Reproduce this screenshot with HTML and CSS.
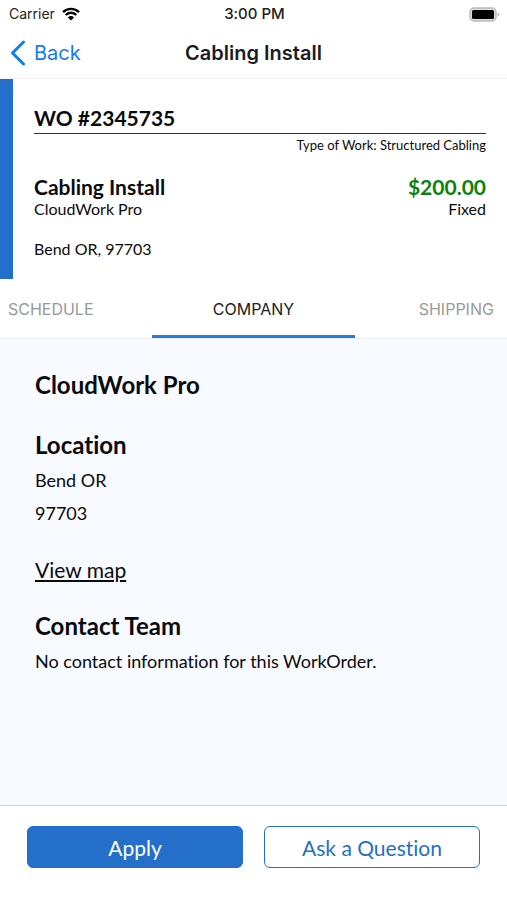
FILE: index.html
```html
<!DOCTYPE html>
<html lang="en">
<head>
    <meta charset="UTF-8">
    <meta name="viewport" content="width=device-width, initial-scale=1.0">
    <title>Cabling Install</title>
    <link rel="stylesheet" href="styles.css">
</head>
<body>

    <!-- Status Bar -->
    <div class="status-bar">
        <div class="carrier">
            <span>Carrier</span>
            <svg class="wifi" viewBox="0 0 18 14" aria-hidden="true">
                <path d="M1 5.2a11.4 11.4 0 0 1 16 0" />
                <path d="M3.7 8a7.5 7.5 0 0 1 10.6 0" />
                <path class="dot" d="M9 13.6 5.9 10.4a4.4 4.4 0 0 1 6.2 0z" />
            </svg>
        </div>
        <span class="time">3:00 PM</span>
        <svg class="battery" viewBox="0 0 31 15" aria-hidden="true">
            <rect class="shell" x="1" y="1" width="26" height="13" rx="4" />
            <rect x="3" y="3" width="22" height="9" rx="1.5" />
            <path class="cap" d="M28.5 5.5q2 .5 2 2t-2 2z" />
        </svg>
    </div>

    <!-- Header -->
    <header class="header">
        <a class="back" href="#">
            <svg viewBox="0 0 16 26" aria-hidden="true">
                <path d="M13.5 2 2.5 13l11 11" />
            </svg>
            Back
        </a>
        <h1>Cabling Install</h1>
    </header>

    <!-- Work Order Summary -->
    <section class="summary">
        <h2 class="order-number">WO #2345735</h2>
        <p class="work-type">Type of Work: Structured Cabling</p>
        <div class="summary-row">
            <h2>Cabling Install</h2>
            <strong class="price">$200.00</strong>
        </div>
        <div class="summary-row">
            <span>CloudWork Pro</span>
            <span>Fixed</span>
        </div>
        <p class="address">Bend OR, 97703</p>
    </section>

    <!-- Tab Navigation -->
    <nav class="tabs">
        <button class="tab">SCHEDULE</button>
        <button class="tab active">COMPANY</button>
        <button class="tab">SHIPPING</button>
    </nav>

    <!-- Company Tab -->
    <main class="content">
        <h2>CloudWork Pro</h2>
        <section>
            <h2>Location</h2>
            <p>Bend OR</p>
            <p>97703</p>
        </section>
        <a class="map-link" href="#">View map</a>
        <section>
            <h2>Contact Team</h2>
            <p>No contact information for this WorkOrder.</p>
        </section>
    </main>

    <footer class="actions">
        <button class="button primary">Apply</button>
        <button class="button">Ask a Question</button>
    </footer>

</body>
</html>
```
FILE: styles.css
```css
* {
    margin: 0;
    padding: 0;
    box-sizing: border-box;
}

body {
    font-family: Lato, sans-serif;
    font-variant-ligatures: none;
    background-color: #fff;
    color: #0b0b0d;
    display: flex;
    flex-direction: column;
    min-height: 100vh;
    font-size: 16px;
    line-height: 20px;
}

button {
    font-family: inherit;
    font-variant-ligatures: inherit;
    cursor: pointer;
}

.status-bar {
    display: grid;
    grid-template-columns: 1fr auto 1fr;
    align-items: center;
    height: 28px;
    padding: 0 7px 0 9px;
    font-family: Inter, sans-serif;
    font-size: 14px;
    color: #222;
}

.carrier {
    display: flex;
    align-items: center;
    gap: 7px;
}

.wifi {
    width: 18px;
    height: 14px;
    fill: none;
    stroke: #000;
    stroke-width: 2.4;
}

.wifi .dot {
    fill: #000;
    stroke: none;
}

.time {
    font-size: 15px;
    font-weight: 500;
}

.battery {
    justify-self: end;
    width: 31px;
    height: 15px;
}

.battery .shell {
    fill: #ddd;
    stroke: #bbb;
    stroke-width: 1.5;
}

.battery .cap {
    fill: #bbb;
}

.header {
    display: grid;
    grid-template-columns: 1fr auto 1fr;
    align-items: center;
    height: 51px;
    padding: 0 10px;
    border-bottom: 1px solid #f2f2f4;
    font-family: Inter, sans-serif;
}

.header h1 {
    font-size: 20px;
    font-weight: 600;
    color: #1c1c1e;
}

.back {
    display: flex;
    align-items: center;
    gap: 8px;
    font-size: 20px;
    color: #0f7bf5;
    text-decoration: none;
}

.back svg {
    width: 16px;
    height: 26px;
    fill: none;
    stroke: #0f7bf5;
    stroke-width: 3;
    stroke-linecap: round;
    stroke-linejoin: round;
}

.summary {
    padding: 27px 21px 20px;
    border-left: 13px solid #236fc9;
}

.summary h2,
.price {
    font-size: 21px;
    font-weight: 700;
    line-height: 24px;
}

.summary .order-number {
    padding-bottom: 3px;
    border-bottom: 1px solid #333;
}

.work-type {
    margin: 1px 0 20px;
    font-size: 13px;
    text-align: right;
}

.summary-row {
    display: flex;
    justify-content: space-between;
}

.price {
    color: #0c820c;
}

.address {
    margin-top: 20px;
}

.tabs {
    display: flex;
    justify-content: center;
    height: 60px;
    overflow: hidden;
    border-bottom: 1px solid #eceef2;
}

.tab {
    flex: 0 0 40%;
    padding-top: 4px;
    border: none;
    border-bottom: 3px solid transparent;
    background: none;
    font-family: Inter, sans-serif;
    font-size: 16px;
    color: #999;
}

.tab.active {
    border-color: #237ee3;
    color: #222;
}

.content {
    flex: 1;
    display: flex;
    flex-direction: column;
    align-items: flex-start;
    gap: 28px;
    padding: 30px 35px;
    background-color: #f7faff;
    font-size: 18px;
    line-height: 33px;
}

.content h2 {
    font-size: 24px;
    font-weight: 700;
    line-height: 32px;
}

.content section h2 {
    margin-bottom: 3px;
}

.map-link {
    font-size: 21px;
    line-height: 24px;
    color: inherit;
}

.actions {
    display: flex;
    gap: 21px;
    padding: 20px 27px 32px;
    border-top: 1px solid #cfd2da;
}

.button {
    flex: 1;
    height: 42px;
    border: 1px solid #236fc9;
    border-radius: 6px;
    background-color: #fff;
    font-size: 21px;
    color: #236fc9;
}

.button.primary {
    background-color: #236fc9;
    color: #fff;
}
```
